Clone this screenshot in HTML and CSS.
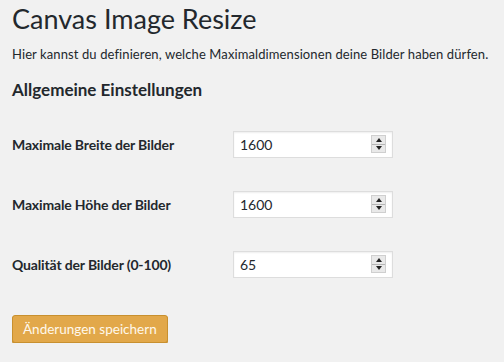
FILE: index.html
```html
<!DOCTYPE html>
<html lang="de">
<head>
    <meta charset="UTF-8">
    <title>Canvas Image Resize</title>
    <link rel="stylesheet" href="styles.css">
</head>
<body>
    <div class="wrap">
        <h1>Canvas Image Resize</h1>
        <p class="intro">Hier kannst du definieren, welche Maximaldimensionen deine Bilder haben dürfen.</p>

        <h2>Allgemeine Einstellungen</h2>

        <form class="settings">
            <div class="field-row">
                <label class="field-label" for="max-width">Maximale Breite der Bilder</label>
                <div class="number-box">
                    <input id="max-width" type="text" value="1600">
                    <span class="spinner"><span class="up"></span><span class="down"></span></span>
                </div>
            </div>
            <div class="field-row">
                <label class="field-label" for="max-height">Maximale Höhe der Bilder</label>
                <div class="number-box">
                    <input id="max-height" type="text" value="1600">
                    <span class="spinner"><span class="up"></span><span class="down"></span></span>
                </div>
            </div>
            <div class="field-row">
                <label class="field-label" for="quality">Qualität der Bilder (0-100)</label>
                <div class="number-box">
                    <input id="quality" type="text" value="65">
                    <span class="spinner"><span class="up"></span><span class="down"></span></span>
                </div>
            </div>

            <div class="submit">
                <button type="button" class="button-primary">Änderungen speichern</button>
            </div>
        </form>
    </div>
</body>
</html>
```

FILE: styles.css
```css
:root {
    --bg: #f1f1f1;
    --text: #23282d;
    --border: #dddddd;
    --accent: #e2a84a;
    --accent-dark: #c8902f;
}

body {
    margin: 0;
    background: var(--bg);
    color: var(--text);
    font-family: 'Lato', 'Noto Sans', sans-serif;
    font-size: 13px;
}

.wrap {
    padding: 0 12px;
}

h1 {
    font-size: 27px;
    font-weight: 400;
    line-height: 30px;
    margin: 4px 0 0;
}

.intro {
    margin: 10px 0 0;
    line-height: 20px;
    letter-spacing: 0.1px;
}

h2 {
    font-size: 17px;
    font-weight: 700;
    margin: 14px 0 0;
    line-height: 24px;
}

.settings {
    margin-top: 12px;
}

.field-row {
    display: flex;
    align-items: center;
    height: 60px;
}

.field-label {
    width: 221px;
    font-size: 14px;
    font-weight: 700;
    letter-spacing: -0.15px;
}

.number-box {
    display: flex;
    align-items: center;
    width: 158px;
    height: 25px;
    background: #fff;
    border: 1px solid var(--border);
    box-shadow: inset 0 1px 2px rgba(0, 0, 0, 0.07);
}

.number-box input {
    flex: 1;
    min-width: 0;
    border: none;
    outline: none;
    background: transparent;
    font: inherit;
    font-size: 14px;
    color: var(--text);
    padding: 0 6px;
}

.spinner {
    display: flex;
    flex-direction: column;
    width: 13px;
    height: 16px;
    margin-right: 6px;
    border: 1px solid #cfcfcf;
    background: #e9e9e9;
}

.spinner span {
    flex: 1;
    display: flex;
    align-items: center;
    justify-content: center;
}

.spinner .up {
    border-bottom: 1px solid #b5b5b5;
}

.spinner .up::after,
.spinner .down::after {
    content: "";
    border-left: 3px solid transparent;
    border-right: 3px solid transparent;
}

.spinner .up::after {
    border-bottom: 4px solid #222;
}

.spinner .down::after {
    border-top: 4px solid #222;
}

.submit {
    margin-top: 21px;
}

.button-primary {
    height: 28px;
    padding: 0 10px;
    background: var(--accent);
    border: 1px solid var(--accent-dark);
    border-radius: 3px;
    color: #fff8ec;
    font: inherit;
    font-size: 13.5px;
    box-shadow: 0 1px 0 var(--accent-dark);
    cursor: pointer;
}
```
